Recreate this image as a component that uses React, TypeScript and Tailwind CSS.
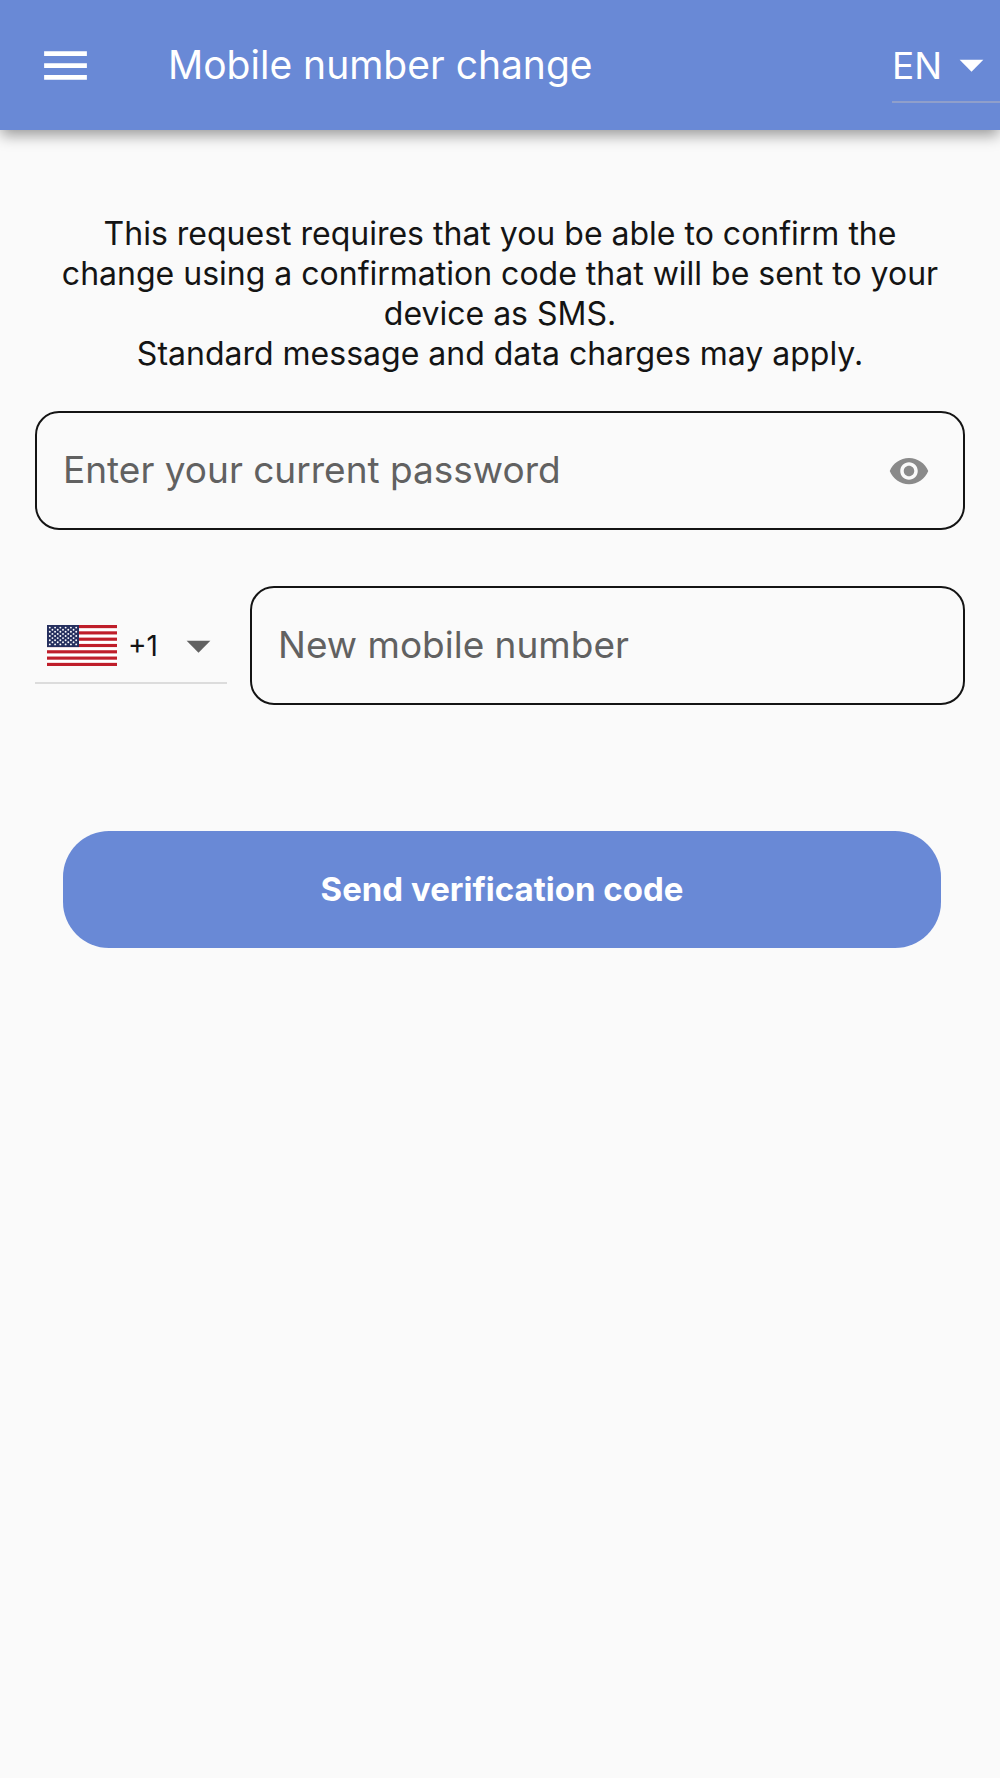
import React, { useState } from 'react';

const COUNTRIES = [
  { code: 'US', dial: '+1' },
  { code: 'GB', dial: '+44' },
  { code: 'FR', dial: '+33' },
];

const MenuIcon = () => (
  <svg viewBox="0 0 24 24" className="size-[57px]" fill="currentColor" aria-hidden="true">
    <path d="M3 18h18v-2H3v2zm0-5h18v-2H3v2zm0-7v2h18V6H3z" />
  </svg>
);

const EyeIcon = () => (
  <svg viewBox="0 0 24 24" className="size-[42px]" fill="currentColor" aria-hidden="true">
    <path d="M12 4.500C7 4.500 2.730 7.610 1 12c1.730 4.390 6 7.500 11 7.500s9.270-3.110 11-7.500c-1.730-4.390-6-7.500-11-7.500zM12 17c-2.760 0-5-2.240-5-5s2.240-5 5-5 5 2.240 5 5-2.240 5-5 5zm0-8c-1.660 0-3 1.340-3 3s1.340 3 3 3 3-1.340 3-3-1.340-3-3-3z" />
  </svg>
);

const CaretIcon = ({ className }: { className: string }) => (
  <svg viewBox="0 0 24 24" className={className} fill="currentColor" aria-hidden="true">
    <path d="M7 10l5 5 5-5z" />
  </svg>
);

const UsFlag = () => (
  <svg viewBox="0 0 70 41" className="w-[70px] h-[41px] shrink-0" aria-hidden="true">
    <rect width="70" height="41" fill="#fff" />
    {[0, 1, 2, 3, 4, 5, 6].map((i) => (
      <rect key={i} y={(i * 2 * 41) / 13} width="70" height={41 / 13} fill="#bf1e2a" />
    ))}
    <rect width="32" height={(41 * 7) / 13} fill="#26305f" />
    {/* 9 staggered rows of 6 and 5 stars */}
    {Array.from({ length: 9 }).map((_, row) =>
      Array.from({ length: row % 2 ? 5 : 6 }).map((_, col) => (
        <circle
          key={`${row}-${col}`}
          cx={2.8 + col * 5.28 + (row % 2 ? 2.64 : 0)}
          cy={2.6 + row * 2.1}
          r="0.95"
          fill="#fff"
        />
      ))
    )}
  </svg>
);

const Header = () => (
  <header className="relative z-10 flex h-[130px] items-center bg-[#6989d6] pl-[37px] text-white shadow-[0_6px_14px_-1px_rgba(0,0,0,0.4)]">
    <button type="button" aria-label="Open menu">
      <MenuIcon />
    </button>
    <h1 className="ml-[74px] flex-1 text-[39px] leading-[48px]">Mobile number change</h1>
    <div className="relative border-b-2 border-[#8f9fcb]">
      <select
        aria-label="Language"
        defaultValue="EN"
        className="block h-[74px] w-[108px] appearance-none bg-transparent pt-1 text-[37px] outline-none"
      >
        <option>EN</option>
        <option>FR</option>
        <option>ES</option>
      </select>
      <CaretIcon className="pointer-events-none absolute right-0 top-[9px] size-[57px]" />
    </div>
  </header>
);

export default function App() {
  const [showPassword, setShowPassword] = useState(false);

  return (
    <div className="min-h-screen bg-[#fafafa] font-['Inter','Liberation_Sans',sans-serif] text-[#141414]">
      <Header />

      <main className="px-[35px] pt-[84px]">
        <p className="px-3 text-center text-[32px] leading-10">
          This request requires that you be able to confirm the change using a confirmation code
          that will be sent to your device as SMS.
          <br />
          Standard message and data charges may apply.
        </p>

        <form onSubmit={(e) => e.preventDefault()}>
          {/* Current password */}
          <div className="mt-[37px] flex h-[119px] items-center rounded-3xl border-2 border-[#141414] pl-[26px] pr-[33px]">
            <input
              type={showPassword ? 'text' : 'password'}
              aria-label="Enter your current password"
              placeholder="Enter your current password"
              className="min-w-0 flex-1 bg-transparent pb-0.5 text-[37px] leading-[44px] outline-none placeholder:text-[#616161]"
            />
            <button
              type="button"
              aria-label="Show password"
              onClick={() => setShowPassword(!showPassword)}
              className="text-[#8a8a8a]"
            >
              <EyeIcon />
            </button>
          </div>

          {/* Country code and new number */}
          <div className="mt-14 flex items-center gap-[23px]">
            <div className="relative flex h-[76px] w-[192px] items-center border-b-2 border-[#dcdcdc] pl-3 pt-0.5">
              <UsFlag />
              <select
                aria-label="Country code"
                defaultValue="US"
                className="h-full min-w-0 flex-1 appearance-none bg-transparent pl-[11px] text-[28px] outline-none"
              >
                {COUNTRIES.map((c) => (
                  <option key={c.code} value={c.code}>
                    {c.dial}
                  </option>
                ))}
              </select>
              <CaretIcon className="pointer-events-none absolute right-0 top-[9px] size-[57px] text-[#616161]" />
            </div>
            <div className="flex h-[119px] min-w-0 flex-1 items-center rounded-3xl border-2 border-[#141414] px-[26px]">
              <input
                type="tel"
                aria-label="New mobile number"
                placeholder="New mobile number"
                className="min-w-0 flex-1 bg-transparent pb-0.5 text-[37px] leading-[44px] outline-none placeholder:text-[#616161]"
              />
            </div>
          </div>

          <div className="mt-[126px] pl-7 pr-6">
            <button
              type="submit"
              className="h-[117px] w-full rounded-[46px] bg-[#6989d6] text-[33px] font-bold text-white"
            >
              Send verification code
            </button>
          </div>
        </form>
      </main>
    </div>
  );
}
